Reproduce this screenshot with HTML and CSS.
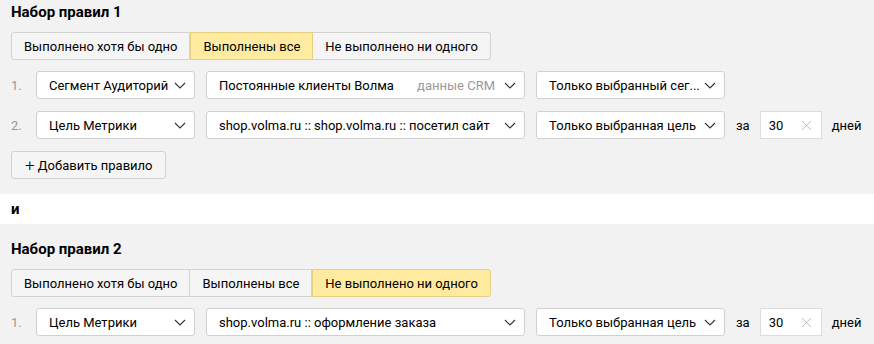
FILE: index.html
```html
<!DOCTYPE html>
<html lang="ru">
  <head>
    <meta charset="UTF-8" />
    <title>Наборы правил</title>
    <link rel="stylesheet" href="styles.css">
  </head>
  <body>
    <div class="ruleset ruleset-first">
      <h2>Набор правил 1</h2>
      <div class="segmented">
        <button>Выполнено хотя бы одно</button>
        <button class="active">Выполнены все</button>
        <button>Не выполнено ни одного</button>
      </div>

      <div class="rule">
        <span class="num">1.</span>
        <div class="select w-type"><span class="val">Сегмент Аудиторий</span><svg class="chev" viewBox="0 0 12 7"><path d="M1 1l5 5 5-5"/></svg></div>
        <div class="select w-target"><span class="val">Постоянные клиенты Волма</span><span class="hint">данные CRM</span><svg class="chev" viewBox="0 0 12 7"><path d="M1 1l5 5 5-5"/></svg></div>
        <div class="select w-mode"><span class="val">Только выбранный сег...</span><svg class="chev" viewBox="0 0 12 7"><path d="M1 1l5 5 5-5"/></svg></div>
      </div>

      <div class="rule">
        <span class="num">2.</span>
        <div class="select w-type"><span class="val">Цель Метрики</span><svg class="chev" viewBox="0 0 12 7"><path d="M1 1l5 5 5-5"/></svg></div>
        <div class="select w-target"><span class="val">shop.volma.ru :: shop.volma.ru :: посетил сайт</span><svg class="chev" viewBox="0 0 12 7"><path d="M1 1l5 5 5-5"/></svg></div>
        <div class="select w-mode"><span class="val">Только выбранная цель</span><svg class="chev" viewBox="0 0 12 7"><path d="M1 1l5 5 5-5"/></svg></div>
        <span class="label">за</span>
        <div class="days"><span>30</span><svg class="clear" viewBox="0 0 12 12"><path d="M1 1l10 10M11 1L1 11"/></svg></div>
        <span class="label">дней</span>
      </div>

      <button class="add"><span class="plus">+</span> Добавить правило</button>
    </div>

    <div class="and">и</div>

    <div class="ruleset">
      <h2>Набор правил 2</h2>
      <div class="segmented">
        <button>Выполнено хотя бы одно</button>
        <button>Выполнены все</button>
        <button class="active">Не выполнено ни одного</button>
      </div>

      <div class="rule">
        <span class="num">1.</span>
        <div class="select w-type"><span class="val">Цель Метрики</span><svg class="chev" viewBox="0 0 12 7"><path d="M1 1l5 5 5-5"/></svg></div>
        <div class="select w-target"><span class="val">shop.volma.ru :: оформление заказа</span><svg class="chev" viewBox="0 0 12 7"><path d="M1 1l5 5 5-5"/></svg></div>
        <div class="select w-mode"><span class="val">Только выбранная цель</span><svg class="chev" viewBox="0 0 12 7"><path d="M1 1l5 5 5-5"/></svg></div>
        <span class="label">за</span>
        <div class="days"><span>30</span><svg class="clear" viewBox="0 0 12 12"><path d="M1 1l10 10M11 1L1 11"/></svg></div>
        <span class="label">дней</span>
      </div>
    </div>
  </body>
</html>
```

FILE: styles.css
```css
* {
  box-sizing: border-box;
}

body {
  margin: 0;
  font-family: Roboto, "Noto Sans", sans-serif;
  font-size: 13px;
  color: #000;
  background: #fff;
}

.ruleset {
  background-color: #f2f2f2;
  padding: 15px 11px 15px;
}

.ruleset-first {
  padding-top: 2px;
}

h2 {
  margin: 0 0 10px;
  font-size: 15px;
  line-height: 20px;
  font-weight: 700;
}

.segmented {
  display: inline-flex;
  margin-bottom: 11px;
}

.segmented button {
  height: 28px;
  padding: 0 12px;
  font: inherit;
  color: #000;
  background-color: #f5f5f5;
  border: 1px solid #d2d2d2;
  border-left: none;
}

.segmented button:first-child {
  border-left: 1px solid #d2d2d2;
  border-radius: 3px 0 0 3px;
}

.segmented button:last-child {
  border-radius: 0 3px 3px 0;
}

.segmented button.active {
  background-color: #ffeba0;
  border-color: #e5cf80;
  border-left: 1px solid #e5cf80;
}

.segmented button.active + button {
  border-left: none;
}

.rule {
  display: flex;
  align-items: center;
  height: 28px;
  margin-bottom: 12px;
}

.num {
  flex-shrink: 0;
  width: 25px;
  color: #999;
}

.select {
  display: flex;
  flex-shrink: 0;
  align-items: center;
  height: 28px;
  margin-right: 11px;
  padding: 0 8px 0 12px;
  background-color: #fff;
  border: 1px solid #d0d0d0;
  border-radius: 3px;
  white-space: nowrap;
}

.select .val {
  flex: 1;
  min-width: 0;
  overflow: hidden;
}

.select .hint {
  color: #999;
  margin-right: 5px;
}

.w-type {
  width: 159px;
}

.w-target {
  width: 319px;
}

.w-mode {
  width: 189px;
}

.chev {
  flex-shrink: 0;
  width: 12px;
  height: 7px;
  margin-left: 4px;
  fill: none;
  stroke: #333;
  stroke-width: 1.1;
}

.label {
  flex-shrink: 0;
  margin-right: 11px;
  color: #000;
}

.days {
  display: flex;
  flex-shrink: 0;
  align-items: center;
  justify-content: space-between;
  width: 62px;
  height: 28px;
  margin-right: 10px;
  margin-left: -1px;
  padding: 0 9px 0 8px;
  background-color: #fff;
  border: 1px solid #ddd;
}

.clear {
  width: 11px;
  height: 11px;
  fill: none;
  stroke: #bbb;
  stroke-width: 1;
}

.add {
  height: 28px;
  padding: 0 12px 0 13px;
  font: inherit;
  color: #000;
  background-color: #f5f5f5;
  border: 1px solid #d0d0d0;
  border-radius: 3px;
}

.plus {
  font-size: 17px;
  font-weight: 300;
  line-height: 1;
  vertical-align: -1px;
}

.and {
  height: 30px;
  line-height: 30px;
  padding-left: 11px;
  font-size: 15px;
  font-weight: 700;
}
```
